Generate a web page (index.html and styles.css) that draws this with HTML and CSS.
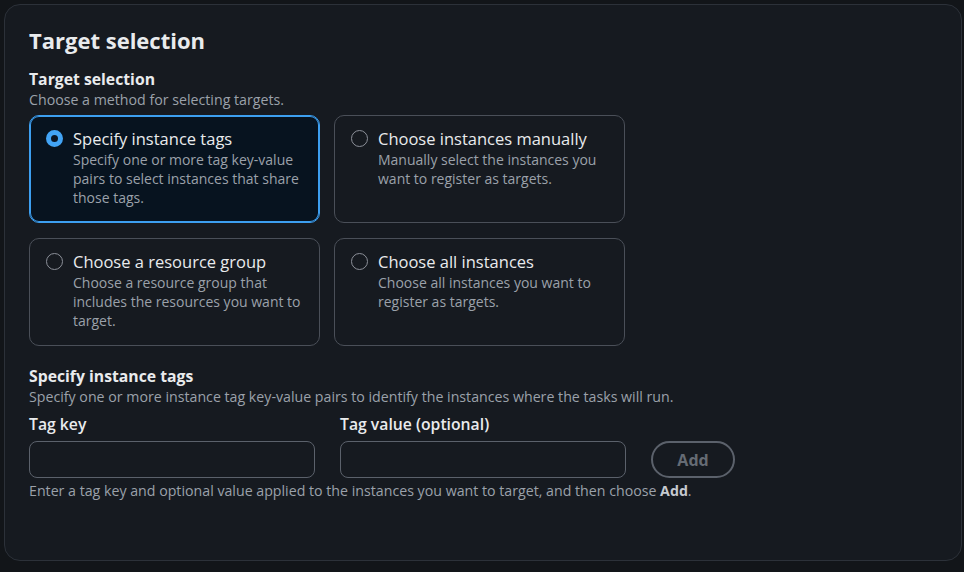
FILE: index.html
```html
<!DOCTYPE html>
<html lang="en">
<head>
    <meta charset="UTF-8">
    <meta name="viewport" content="width=device-width, initial-scale=1.0">
    <title>Target selection</title>
    <link rel="stylesheet" href="styles.css">
</head>
<body>
    <div class="panel">
        <h2 class="panel-title">Target selection</h2>

        <div class="field">
            <div class="label">Target selection</div>
            <div class="desc">Choose a method for selecting targets.</div>
            <div class="tiles">
                <label class="tile selected">
                    <span class="radio checked"></span>
                    <span class="tile-text">
                        <span class="tile-title">Specify instance tags</span>
                        <span class="tile-desc">Specify one or more tag key-value pairs to select instances that share those tags.</span>
                    </span>
                </label>
                <label class="tile">
                    <span class="radio"></span>
                    <span class="tile-text">
                        <span class="tile-title">Choose instances manually</span>
                        <span class="tile-desc">Manually select the instances you want to register as targets.</span>
                    </span>
                </label>
                <label class="tile">
                    <span class="radio"></span>
                    <span class="tile-text">
                        <span class="tile-title">Choose a resource group</span>
                        <span class="tile-desc">Choose a resource group that includes the resources you want to target.</span>
                    </span>
                </label>
                <label class="tile">
                    <span class="radio"></span>
                    <span class="tile-text">
                        <span class="tile-title">Choose all instances</span>
                        <span class="tile-desc">Choose all instances you want to register as targets.</span>
                    </span>
                </label>
            </div>
        </div>

        <div class="field tags">
            <div class="label">Specify instance tags</div>
            <div class="desc">Specify one or more instance tag key-value pairs to identify the instances where the tasks will run.</div>
            <div class="tag-row">
                <div class="tag-col">
                    <div class="input-label">Tag key</div>
                    <input type="text" class="input">
                </div>
                <div class="tag-col">
                    <div class="input-label">Tag value (optional)</div>
                    <input type="text" class="input">
                </div>
                <button class="btn-add" disabled>Add</button>
            </div>
            <div class="hint">Enter a tag key and optional value applied to the instances you want to target, and then choose <b>Add</b>.</div>
        </div>
    </div>
</body>
</html>
```

FILE: styles.css
```css
body {
    margin: 0;
    padding: 4px 2px 0 4px;
    background-color: #121519;
    font-family: "Open Sans", Arial, sans-serif;
    color: #e9ebed;
}
.panel {
    box-sizing: border-box;
    height: 557px;
    background-color: #161a20;
    border: 1px solid #2c3139;
    border-radius: 16px;
    padding: 22px 24px;
}
.panel-title {
    margin: 0 0 15px;
    font-size: 22px;
    line-height: 26px;
    font-weight: 700;
}
.label {
    font-size: 15.75px;
    line-height: 22px;
    font-weight: 700;
}
.desc {
    font-size: 14.2px;
    line-height: 20px;
    color: #9ba1aa;
}
.tiles {
    display: grid;
    grid-template-columns: 291px 291px;
    column-gap: 14px;
    row-gap: 15px;
    margin-top: 5px;
}
.tile {
    box-sizing: border-box;
    height: 108px;
    display: flex;
    gap: 10px;
    padding: 11px 8px 11px 16px;
    border: 1px solid #4a4f58;
    border-radius: 10px;
    cursor: pointer;
}
.tile.selected {
    background-color: #07131f;
    border-color: #3d9ff0;
    box-shadow: inset 0 0 0 1px #3d9ff0;
}
.radio {
    flex: none;
    box-sizing: border-box;
    width: 17px;
    height: 17px;
    margin-top: 3px;
    border: 1.5px solid #8c9099;
    border-radius: 50%;
}
.radio.checked {
    border: 5px solid #42a4f5;
    background-color: #0b1624;
}
.tile-text {
    display: flex;
    flex-direction: column;
}
.tile-title {
    font-size: 16.5px;
    line-height: 23px;
}
.tile-desc {
    font-size: 14px;
    line-height: 19px;
    color: #9ba1aa;
}
.tags {
    margin-top: 19px;
}
.tag-row {
    display: flex;
    align-items: flex-end;
    gap: 25px;
    margin-top: 6px;
}
.tag-col {
    width: 286px;
}
.input-label {
    font-size: 15.75px;
    line-height: 22px;
    font-weight: 600;
    margin-bottom: 6px;
}
.input {
    box-sizing: border-box;
    display: block;
    width: 286px;
    height: 37px;
    background-color: #161a20;
    border: 1px solid #5b616b;
    border-radius: 8px;
}
.btn-add {
    box-sizing: border-box;
    width: 84px;
    height: 37px;
    background: transparent;
    border: 2px solid #5b616b;
    border-radius: 20px;
    font-family: inherit;
    font-size: 16px;
    font-weight: 700;
    color: #656b74;
}
.hint {
    margin-top: 3px;
    font-size: 14.2px;
    line-height: 20px;
    color: #9ba1aa;
}
.hint b {
    color: #c6cad0;
}
```
